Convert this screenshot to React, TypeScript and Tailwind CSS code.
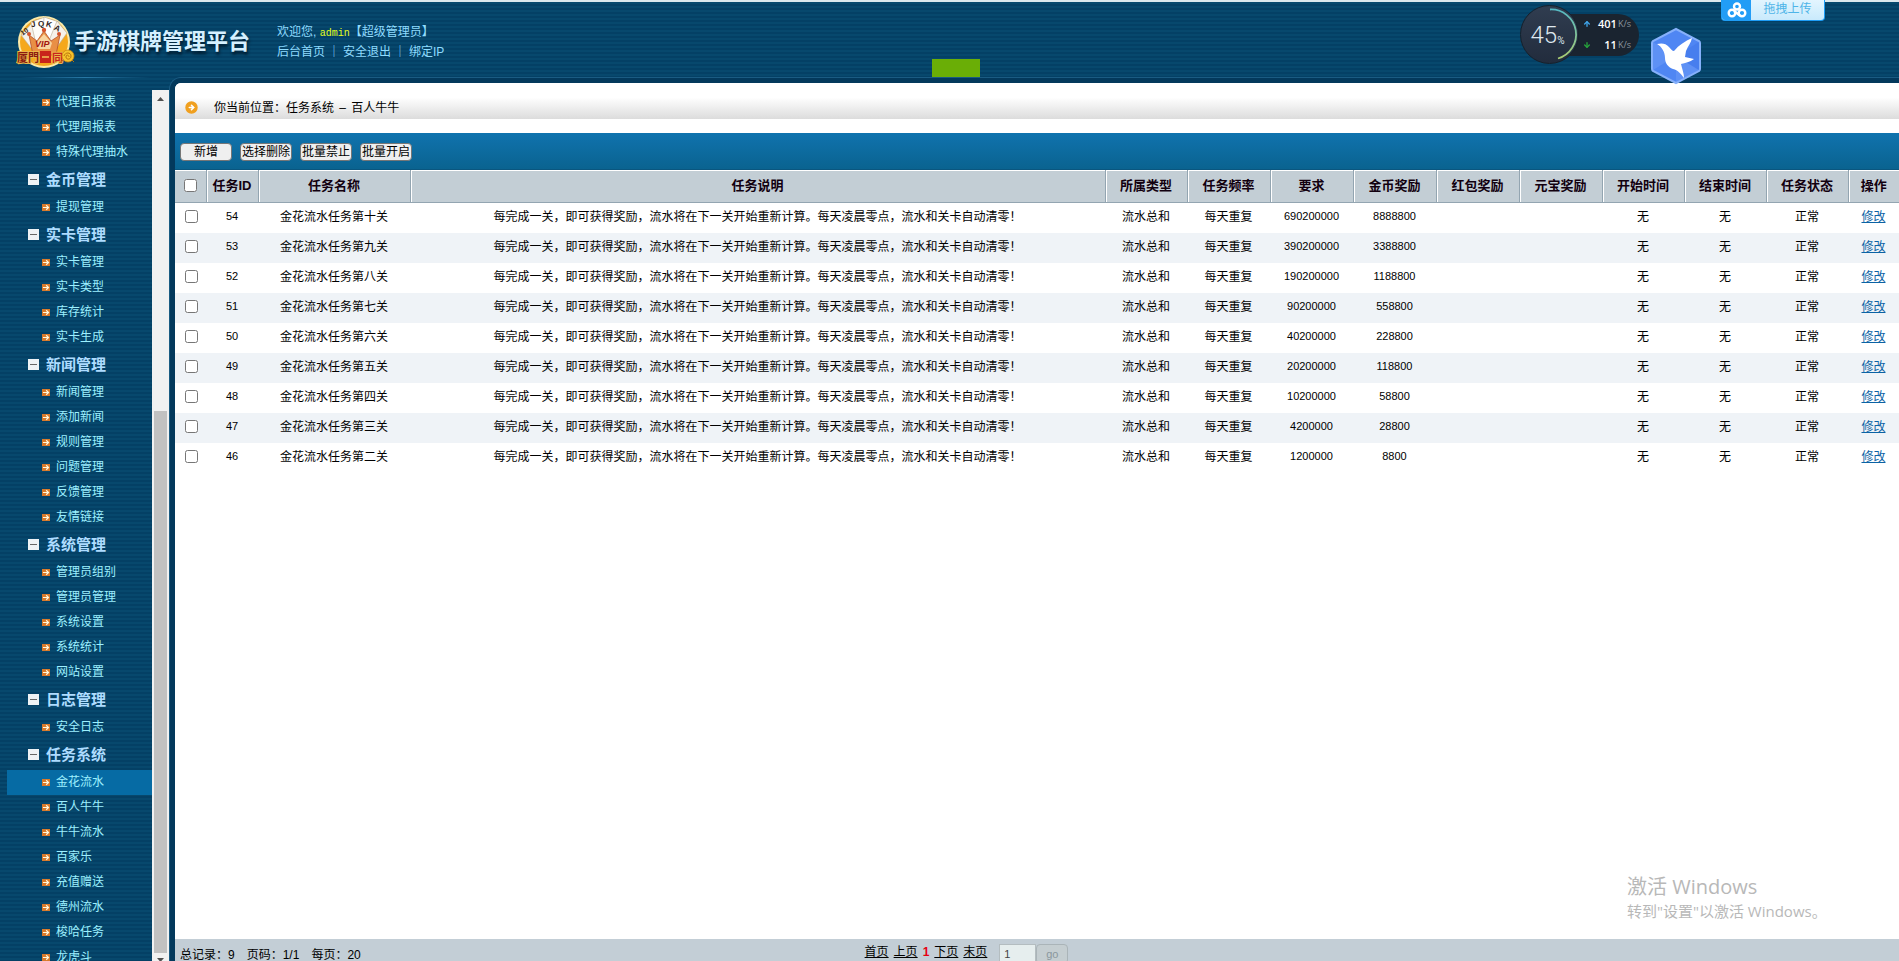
import { ArrowDown, ArrowUp, CircleArrowRight } from 'lucide-react';

const menu = [
  { title: '', items: ['代理日报表', '代理周报表', '特殊代理抽水'] },
  { title: '金币管理', items: ['提现管理'] },
  { title: '实卡管理', items: ['实卡管理', '实卡类型', '库存统计', '实卡生成'] },
  { title: '新闻管理', items: ['新闻管理', '添加新闻', '规则管理', '问题管理', '反馈管理', '友情链接'] },
  { title: '系统管理', items: ['管理员组别', '管理员管理', '系统设置', '系统统计', '网站设置'] },
  { title: '日志管理', items: ['安全日志'] },
  {
    title: '任务系统',
    items: ['金花流水', '百人牛牛', '牛牛流水', '百家乐', '充值赠送', '德州流水', '梭哈任务', '龙虎斗'],
  },
];

const description = '每完成一关，即可获得奖励，流水将在下一关开始重新计算。每天凌晨零点，流水和关卡自动清零！';

const tasks = [
  { id: 54, level: '十', need: 690200000, gold: 8888800 },
  { id: 53, level: '九', need: 390200000, gold: 3388800 },
  { id: 52, level: '八', need: 190200000, gold: 1188800 },
  { id: 51, level: '七', need: 90200000, gold: 558800 },
  { id: 50, level: '六', need: 40200000, gold: 228800 },
  { id: 49, level: '五', need: 20200000, gold: 118800 },
  { id: 48, level: '四', need: 10200000, gold: 58800 },
  { id: 47, level: '三', need: 4200000, gold: 28800 },
  { id: 46, level: '二', need: 1200000, gold: 8800 },
];

const columns = [
  { label: '任务ID', width: 'w-[52px]' },
  { label: '任务名称', width: 'w-[152px]' },
  { label: '任务说明', width: '' },
  { label: '所属类型', width: 'w-[82px]' },
  { label: '任务频率', width: 'w-[83px]' },
  { label: '要求', width: 'w-[83px]' },
  { label: '金币奖励', width: 'w-[83px]' },
  { label: '红包奖励', width: 'w-[83px]' },
  { label: '元宝奖励', width: 'w-[83px]' },
  { label: '开始时间', width: 'w-[82px]' },
  { label: '结束时间', width: 'w-[82px]' },
  { label: '任务状态', width: 'w-[82px]' },
  { label: '操作', width: 'w-[51px]' },
];

const actions = ['新增', '选择删除', '批量禁止', '批量开启'];

function Logo() {
  return (
    <svg width="60" height="56" viewBox="0 0 60 56" className="shrink-0">
      <circle cx="28" cy="28" r="26" fill="#fbe9a8" />
      <circle cx="28" cy="28" r="24" fill="#f5a81c" />
      <path d="M5 21 16 9l14 28-8 6z" fill="#f4f1ea" stroke="#b9ab92" strokeWidth=".6" />
      <path d="m15 8 14-5 5 36H22z" fill="#fdfcf8" stroke="#b9ab92" strokeWidth=".6" />
      <path d="m28 3 15 5-8 30H26z" fill="#fff" stroke="#b9ab92" strokeWidth=".6" />
      <path d="m41 7 10 12-15 21-6-6z" fill="#f6f2ea" stroke="#b9ab92" strokeWidth=".6" />
      <g fill="#2b2118" fontFamily="Liberation Sans, sans-serif" fontWeight="700" fontSize="8">
        <text x="4" y="20" transform="rotate(-35 8 17)" fontSize="7">10</text>
        <text x="15" y="13" transform="rotate(-10 17 11)">J</text>
        <text x="22" y="12">Q</text>
        <text x="30" y="13" transform="rotate(15 33 11)">K</text>
        <text x="38" y="17" transform="rotate(28 41 15)">A</text>
      </g>
      <path d="m13 21 8 6 7-10 7 10 9-6-4 20H17z" fill="#e98f45" stroke="#b4502a" strokeWidth=".8" />
      <path d="m20 29 8-9 8 9-2 6H22z" fill="#f8d5a0" />
      <g fill="#d4552e">
        <circle cx="13" cy="20" r="2" />
        <circle cx="28" cy="16" r="2.2" />
        <circle cx="43" cy="20" r="2" />
      </g>
      <text x="19" y="33" fill="#a3160f" fontFamily="Liberation Sans, sans-serif" fontWeight="700" fontStyle="italic" fontSize="9">
        VIP
      </text>
      <text x="1" y="48" fill="#8c1a10" stroke="#e9b64a" strokeWidth="2" paintOrder="stroke" fontFamily="Noto Sans CJK SC, sans-serif" fontWeight="700" fontSize="11">
        厦門
      </text>
      <rect x="24" y="37" width="11" height="12" fill="#c9231b" />
      <path d="M26 43h7" stroke="#f2c55a" strokeWidth="1.500" />
      <text x="36" y="48" fill="#c9231b" stroke="#e9b64a" strokeWidth="2" paintOrder="stroke" fontFamily="Noto Sans CJK SC, sans-serif" fontWeight="700" fontSize="11">
        同
      </text>
      <circle cx="52" cy="42" r="6" fill="#f6c32c" stroke="#c98512" strokeWidth=".8" />
      <path d="M48 42c1-4 7-4 7 0s-5 4-5 1 3-2 3 0M47 46l-3 3M56 46l2 2" fill="none" stroke="#b8750c" />
    </svg>
  );
}

function ItemIcon() {
  return (
    <svg width="8" height="7" viewBox="0 0 8 7" className="shrink-0">
      <rect width="8" height="7" fill="#d97a2b" />
      <path d="M1 3.500h5.500M4.200 1.300 6.500 3.500 4.200 5.700" fill="none" stroke="#fff8dc" strokeWidth="1.200" />
    </svg>
  );
}

function MinusIcon() {
  return (
    <svg width="11" height="11" viewBox="0 0 11 11" className="shrink-0">
      <rect width="11" height="11" fill="#eef2f5" />
      <path d="M2 5.500h7" stroke="#666" />
    </svg>
  );
}

function NetMonitor() {
  return (
    <div className="absolute left-[1520px] top-[5px] flex items-center font-['Open_Sans',sans-serif]">
      <div className="relative z-10 flex size-[59px] items-center justify-center rounded-full border border-[#16202b] bg-gradient-to-b from-[#303d50] to-[#222c3d] pr-1 font-['Roboto',sans-serif] text-[#dfe8ef]">
        <span className="text-2xl font-light">45</span>
        <span className="mt-3 text-[10px]">%</span>
        <svg width="59" height="59" viewBox="0 0 59 59" className="absolute -left-px -top-px">
          <defs>
            <linearGradient id="load" x1="0" y1="0" x2="0" y2="1">
              <stop offset="0" stopColor="#55b9c4" />
              <stop offset="1" stopColor="#a9cc72" />
            </linearGradient>
          </defs>
          <path d="M30 4.500a25 25 0 0 1 8 49" fill="none" stroke="url(#load)" strokeWidth="1.800" />
        </svg>
      </div>
      <div className="-ml-8 flex h-[42px] w-[92px] flex-col justify-center rounded-r-full bg-[#1a2430] pl-9 pr-2 text-[11px]">
        <div className="flex h-[21px] items-center">
          <ArrowUp size={8} strokeWidth={4} className="text-[#3fa4e8]" />
          <span className="flex-1 text-right font-semibold text-white">401</span>
          <span className="ml-px text-[9px] text-[#8d979f]">K/s</span>
        </div>
        <div className="flex h-[21px] items-center">
          <ArrowDown size={8} strokeWidth={4} className="text-[#27a33c]" />
          <span className="flex-1 text-right font-semibold text-white">11</span>
          <span className="ml-px text-[9px] text-[#8d979f]">K/s</span>
        </div>
      </div>
    </div>
  );
}

function BirdBadge() {
  return (
    <svg width="52" height="58" viewBox="0 0 52 58" className="absolute left-[1650px] top-[27px]">
      <path d="M26 2 49 14q1 1 1 2v26q0 1-1 2L26 56 3 44q-1-1-1-2V16q0-1 1-2z" fill="#4f86f3" stroke="#86b0fb" strokeWidth="2" />
      <path d="M26 29 3 15v28zM26 29l23 14L26 55z" fill="#6d9bf8" opacity=".5" />
      <path d="M26 29 49 15v28z" fill="#3f76ea" opacity=".5" />
      <path
        d="M7 17c4-1 9-1 12 3 2 2 3 4 5 4 5-6 11-10 18-13-1 5-4 8-6 13l-1 6c3 1 6 1 9 2-4 3-9 4-13 5 1 5 3 9 3 14-3-4-6-8-11-9-5-2-8-6-8-11 0-6-3-11-8-14z"
        fill="#fff"
      />
    </svg>
  );
}

function UploadButton() {
  return (
    <button className="absolute left-[1721px] top-0 flex h-[21px] w-[104px] overflow-hidden rounded-b border border-t-0 border-[#1e9df5] bg-gradient-to-b from-[#e3f5fe] to-[#c9eafc] text-xs leading-[18px] text-[#4db4e8]">
      <span className="flex h-full w-[29px] items-center justify-center bg-[#229df6]">
        <svg width="20" height="16" viewBox="0 0 20 16" fill="none" stroke="#fff" strokeWidth="2.400">
          <circle cx="10" cy="4.500" r="3" />
          <circle cx="5" cy="11" r="3.300" />
          <circle cx="15" cy="11" r="3.300" />
          <path d="m7 9 6 4.500" />
        </svg>
      </span>
      <span className="flex-1">拖拽上传</span>
    </button>
  );
}

function Header() {
  return (
    <header className="flex h-[77px] shrink-0 items-start border-t-2 border-[#dbe7ec]">
      <div className="flex w-[277px] items-center pl-4 pt-3">
        <Logo />
        <h1 className="-ml-0.5 whitespace-nowrap text-[22px] font-bold leading-8 text-[#d5f0ff] [text-shadow:1px_3px_3px_#001c30]">
          手游棋牌管理平台
        </h1>
      </div>
      <div className="pt-[21px] text-xs leading-[19px] text-[#8fdcff]">
        <p>
          欢迎您, <span className="font-['Liberation_Mono',monospace] text-[10px] text-[#e4ff1c]">admin</span>
          【超级管理员】
        </p>
        <p className="flex">
          <a href="#home">后台首页</a>
          <span className="w-[18px] text-center">｜</span>
          <a href="#logout">安全退出</a>
          <span className="w-[18px] text-center">｜</span>
          <a href="#ip">绑定IP</a>
        </p>
      </div>
    </header>
  );
}

function Sidebar() {
  return (
    <aside className="flex w-[169px] shrink-0 flex-col overflow-hidden">
      <div className="ml-5 h-px w-[130px] shrink-0 bg-gradient-to-r from-transparent via-[#2878a5] to-transparent" />
      <div className="mt-3 flex min-h-0 flex-1">
        <nav className="flex-1 overflow-hidden pl-[7px]">
          {menu.map((group) => (
            <div key={group.title}>
              {group.title && (
                <h2 className="flex h-[30px] items-center gap-[7px] pb-px pl-[21px] text-[15px] font-bold leading-5 text-[#aedcff]">
                  <MinusIcon />
                  {group.title}
                </h2>
              )}
              <ul>
                {group.items.map((item) => (
                  <li key={item}>
                    <a
                      href="#menu"
                      className={`flex h-[25px] items-center gap-1.5 pb-px pl-[35px] text-xs text-[#9df0ff] ${
                        item === '金花流水' ? 'bg-[#066ba4]' : ''
                      }`}
                    >
                      <ItemIcon />
                      {item}
                    </a>
                  </li>
                ))}
              </ul>
            </div>
          ))}
        </nav>
        {/* scrollbar */}
        <div className="flex w-[17px] flex-col items-center bg-[#f1f1f1]">
          <svg width="7" height="4" viewBox="0 0 7 4" className="my-[7px]">
            <path d="M0 4 3.500 0 7 4z" fill="#505050" />
          </svg>
          <div className="flex-[303]" />
          <div className="w-[13px] flex-[542] bg-[#c1c1c1]" />
          <svg width="7" height="3" viewBox="0 0 7 3" className="mt-[5px]">
            <path d="M0 0h7L3.500 4z" fill="#505050" />
          </svg>
        </div>
      </div>
    </aside>
  );
}

function TaskTable() {
  return (
    <table className="w-full table-fixed border-collapse text-center text-xs">
      <thead>
        <tr className="h-8 border-b border-t border-b-[#93a5b1] border-t-white bg-[#c3ced5] text-[13px] text-[#12000f]">
          <th className="w-[31px] border-r border-[#93a5b1] pb-0.5">
            <input type="checkbox" aria-label="全选" className="mx-auto block size-[13px]" />
          </th>
          {columns.map((column) => (
            <th
              key={column.label}
              className={`whitespace-nowrap border-r border-[#93a5b1] pb-0.5 font-bold shadow-[inset_1px_0_0_#fff] last:border-r-0 ${column.width}`}
            >
              {column.label}
            </th>
          ))}
        </tr>
      </thead>
      <tbody>
        {tasks.map((task) => (
          <tr key={task.id} className="h-[30px] even:bg-[#eff3f7] [&>td]:pb-0.5">
            <td className="pl-0.5">
              <input type="checkbox" aria-label={`选择任务 ${task.id}`} className="mx-auto block size-[13px]" />
            </td>
            <td className="text-[11px]">{task.id}</td>
            <td>金花流水任务第{task.level}关</td>
            <td>{description}</td>
            <td>流水总和</td>
            <td>每天重复</td>
            <td className="text-[11px]">{task.need}</td>
            <td className="text-[11px]">{task.gold}</td>
            <td />
            <td />
            <td>无</td>
            <td>无</td>
            <td>正常</td>
            <td>
              <a href="#edit" className="text-[#0b63a5] underline">
                修改
              </a>
            </td>
          </tr>
        ))}
      </tbody>
    </table>
  );
}

function Pager() {
  return (
    <footer className="flex h-[22px] shrink-0 items-start overflow-hidden bg-[#c3ced6] text-xs leading-4 text-black">
      <div className="flex w-2/5 gap-3 pl-[5px] pt-2">
        <span>总记录：9</span>
        <span>页码：1/1</span>
        <span>每页：20</span>
      </div>
      <div className="flex gap-[5px] pt-[5px]">
        <a href="#first" className="underline">首页</a>
        <a href="#prev" className="underline">上页</a>
        <span className="font-bold text-[#e60012]">1</span>
        <a href="#next" className="underline">下页</a>
        <a href="#last" className="underline">末页</a>
      </div>
      <form className="flex pl-3 pt-[5px]">
        <input
          type="text"
          aria-label="页码"
          defaultValue="1"
          className="h-5 w-[37px] border border-[#b4bdc0] bg-[#e6eeee] px-1 text-[11px] text-[#444]"
        />
        <button type="button" disabled className="h-5 w-8 rounded-sm border border-[#aab4b8] bg-[#c5ced1] text-[11px] text-[#8a979d]">
          go
        </button>
      </form>
    </footer>
  );
}

export default function App() {
  return (
    <div className="relative flex h-screen flex-col overflow-hidden bg-[#044268] bg-[repeating-linear-gradient(180deg,#044065_0px,#044065_2px,#07486d_2px,#07486d_4px)] font-['Liberation_Sans','Noto_Sans_CJK_SC',sans-serif]">
      <Header />
      <div className="flex min-h-0 flex-1">
        <Sidebar />
        <div className="flex min-w-0 flex-1 rounded-tl-xl border-l border-t border-[#1a5b82] bg-[#03395c] pl-[5px] pt-[5px]">
          <main className="flex min-w-0 flex-1 flex-col overflow-hidden rounded-tl-md bg-white">
            <div className="mb-[14px] flex h-9 shrink-0 items-center gap-4 bg-gradient-to-b from-white from-40% to-[#dcdcdc] pl-[10px] pt-3 text-xs text-black">
              <CircleArrowRight size={13} strokeWidth={3} className="fill-[#f0a020] text-white [&>circle]:stroke-[#f0a020]" />
              <p className="pt-0.5">
                你当前位置：任务系统 <span className="px-0.5">–</span> 百人牛牛
              </p>
            </div>
            <div className="flex h-[37px] shrink-0 items-center gap-2 border-b border-[#0a567f] bg-gradient-to-b from-[#1073ae] to-[#0a6390] pl-[5px] pt-px">
              {actions.map((action) => (
                <button key={action} className="h-[18px] w-[52px] whitespace-nowrap rounded-sm border border-[#767676] bg-[#efefef] text-xs leading-4 text-black">
                  {action}
                </button>
              ))}
            </div>
            <div className="min-h-0 flex-1 overflow-hidden">
              <TaskTable />
            </div>
            <Pager />
          </main>
        </div>
      </div>

      {/* desktop widgets floating over the page */}
      <div className="absolute left-[932px] top-[59px] h-[18px] w-12 bg-[#6aae06]" />
      <NetMonitor />
      <BirdBadge />
      <UploadButton />
      <div className="absolute bottom-[38px] right-[72px] w-[200px] whitespace-nowrap font-['Open_Sans','Noto_Sans_CJK_SC',sans-serif] text-[#b8b8b8]">
        <p className="text-xl leading-6">激活 Windows</p>
        <p className="text-[15px] leading-6">转到"设置"以激活 Windows。</p>
      </div>
    </div>
  );
}
